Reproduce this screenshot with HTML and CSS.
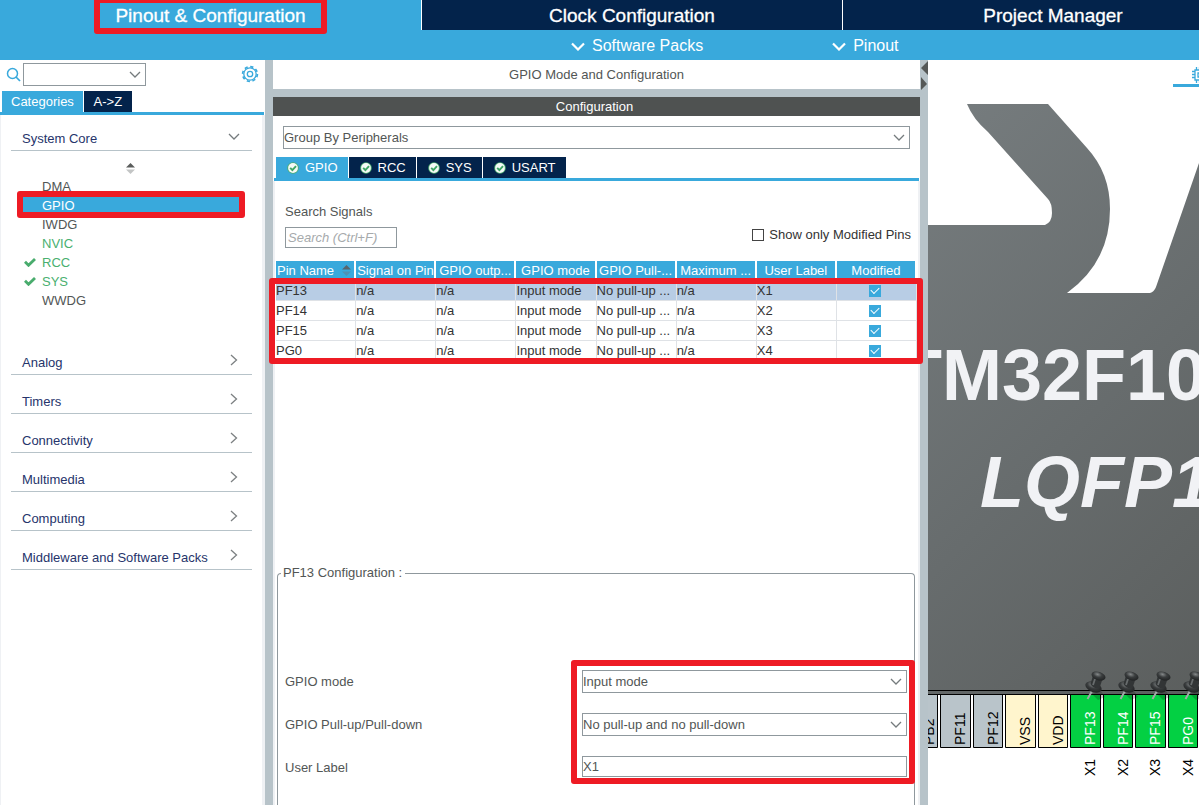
FILE: index.html
```html
<!DOCTYPE html>
<html lang="en">
<head>
<meta charset="utf-8">
<title>Pinout &amp; Configuration</title>
<link rel="stylesheet" href="styles.css">
</head>
<body>
<svg class="defs" aria-hidden="true">
  <defs><radialGradient id="knob" cx=".4" cy=".35" r=".7"><stop offset="0" stop-color="#85898a"/><stop offset=".45" stop-color="#3a3d3e"/><stop offset="1" stop-color="#1e2021"/></radialGradient></defs>
  <symbol id="down" viewBox="0 0 12 7"><path d="M1 1l5 5 5-5" fill="none" stroke="#757b7d" stroke-width="1.3"/></symbol>
  <symbol id="right" viewBox="0 0 8 12"><path d="M1 1l5.500 5L1 11" fill="none" stroke="#7c8082" stroke-width="1.3"/></symbol>
  <symbol id="bold-down" viewBox="0 0 14 9"><path d="M1 1.500l6 6 6-6" fill="none" stroke="#fff" stroke-width="2.2"/></symbol>
  <symbol id="sort" viewBox="0 0 9 11"><path d="M4.500 0L9 4.500H0z" fill="#5a5d5c"/><path d="M0 6.500h9L4.500 11z" fill="#c3c5c5"/></symbol>
  <symbol id="sort-blue" viewBox="0 0 9 11"><path d="M4.500 0L9 4.500H0z" fill="#59656d"/><path d="M0 6.500h9L4.500 11z" fill="#4f91b4"/></symbol>
  <symbol id="check" viewBox="0 0 12 9"><path d="M1 3.800l3.500 3.500L11 1" fill="none" stroke="#49ac6d" stroke-width="2.800"/></symbol>
  <symbol id="ok" viewBox="0 0 12 12"><circle cx="6" cy="6" r="5.800" fill="#4cae70"/><circle cx="6" cy="6" r="4.900" fill="#f4faf6"/><path d="M3.200 5.800l2.200 2.300 3.600-4" fill="none" stroke="#3fa765" stroke-width="1.900"/></symbol>
  <symbol id="pin" viewBox="0 0 26 32">
    <path d="M8 23l9-3 4 6-7 3z" fill="#000" opacity=".2"/>
    <path d="M8 20L3.500 28" stroke="#a2a7a8" stroke-width="2"/>
    <ellipse cx="9.500" cy="16" rx="8.500" ry="5" transform="rotate(22 9.500 16)" fill="url(#knob)"/>
    <path d="M9 4.500L18.500 8 15.500 17Q9 18 6.500 13z" fill="#323536"/>
    <path d="M11 8L9 14" stroke="#686c6d" stroke-width="1.800"/>
    <ellipse cx="14.500" cy="5" rx="7.200" ry="4.200" transform="rotate(18 14.500 5)" fill="url(#knob)"/>
  </symbol>
</svg>

<header class="top">
  <nav class="main-tabs">
    <button class="main-tab active"><span class="marked">Pinout &amp; Configuration</span></button>
    <button class="main-tab">Clock Configuration</button>
    <button class="main-tab">Project Manager</button>
  </nav>
  <div class="menu-bar">
    <button class="menu"><svg class="i14"><use href="#bold-down"/></svg>Software Packs</button>
    <button class="menu"><svg class="i14"><use href="#bold-down"/></svg>Pinout</button>
  </div>
</header>

<main class="workspace">
  <aside class="side">
    <div class="side-tools">
      <svg class="search-icon" viewBox="0 0 15 15"><circle cx="6.500" cy="6.500" r="5" fill="none" stroke="#39a9dc" stroke-width="1.500"/><path d="M10 10l4 4" stroke="#39a9dc" stroke-width="1.700"/></svg>
      <span class="select-wrap finder"><select aria-label="Find peripheral"><option></option></select><svg class="arrow"><use href="#down"/></svg></span>
      <button class="gear" aria-label="Settings"><svg viewBox="0 0 18 18" width="18" height="18"><g fill="none" stroke="#39a9dc"><circle cx="9" cy="9" r="7.400" stroke-width="1.700" stroke-dasharray="3.200 2.611"/><circle cx="9" cy="9" r="6.200" stroke-width="1.300"/><circle cx="9" cy="9" r="2.700" stroke-width="1.300"/></g></svg></button>
    </div>
    <div class="tabs side-tabs"><button class="tab active">Categories</button><button class="tab">A-&gt;Z</button></div>
    <div class="side-body">
      <button class="cat">System Core<svg class="i12"><use href="#down"/></svg></button>
      <svg class="sorter"><use href="#sort"/></svg>
      <ul class="items">
        <li>DMA</li>
        <li class="selected">GPIO</li>
        <li>IWDG</li>
        <li class="green">NVIC</li>
        <li class="green"><svg class="tick"><use href="#check"/></svg>RCC</li>
        <li class="green"><svg class="tick"><use href="#check"/></svg>SYS</li>
        <li>WWDG</li>
      </ul>
      <button class="cat">Analog<svg class="i8"><use href="#right"/></svg></button>
      <button class="cat">Timers<svg class="i8"><use href="#right"/></svg></button>
      <button class="cat">Connectivity<svg class="i8"><use href="#right"/></svg></button>
      <button class="cat">Multimedia<svg class="i8"><use href="#right"/></svg></button>
      <button class="cat">Computing<svg class="i8"><use href="#right"/></svg></button>
      <button class="cat">Middleware and Software Packs<svg class="i8"><use href="#right"/></svg></button>
    </div>
  </aside>
  <div class="divider"></div>

  <section class="config">
    <h1 class="mode-title">GPIO Mode and Configuration</h1>
    <h2 class="config-title">Configuration</h2>
    <div class="config-body">
      <span class="select-wrap group-by"><select aria-label="Grouping"><option>Group By Peripherals</option></select><svg class="arrow"><use href="#down"/></svg></span>
      <div class="tabs signal-tabs">
        <button class="tab active"><svg class="i12r"><use href="#ok"/></svg>GPIO</button>
        <button class="tab"><svg class="i12r"><use href="#ok"/></svg>RCC</button>
        <button class="tab"><svg class="i12r"><use href="#ok"/></svg>SYS</button>
        <button class="tab"><svg class="i12r"><use href="#ok"/></svg>USART</button>
      </div>
      <div class="signals">
        <div class="search-row">
          <div class="search-box"><label for="q">Search Signals</label><input id="q" type="text" placeholder="Search (Ctrl+F)"></div>
          <label class="only"><input type="checkbox" class="plain-box">Show only Modified Pins</label>
        </div>
        <div class="table-area">
          <table class="pins">
            <thead><tr><th class="first"><span>Pin Name<svg class="sort-mini"><use href="#sort-blue"/></svg></span></th><th class="left">Signal on Pin</th><th>GPIO outp...</th><th>GPIO mode</th><th>GPIO Pull-...</th><th>Maximum ...</th><th>User Label</th><th>Modified</th></tr></thead>
            <tbody>
              <tr class="current"><td>PF13</td><td>n/a</td><td>n/a</td><td>Input mode</td><td>No pull-up ...</td><td>n/a</td><td>X1</td><td class="mod"><input type="checkbox" class="blue-box" aria-label="PF13 modified" checked></td></tr>
              <tr><td>PF14</td><td>n/a</td><td>n/a</td><td>Input mode</td><td>No pull-up ...</td><td>n/a</td><td>X2</td><td class="mod"><input type="checkbox" class="blue-box" aria-label="PF14 modified" checked></td></tr>
              <tr><td>PF15</td><td>n/a</td><td>n/a</td><td>Input mode</td><td>No pull-up ...</td><td>n/a</td><td>X3</td><td class="mod"><input type="checkbox" class="blue-box" aria-label="PF15 modified" checked></td></tr>
              <tr><td>PG0</td><td>n/a</td><td>n/a</td><td>Input mode</td><td>No pull-up ...</td><td>n/a</td><td>X4</td><td class="mod"><input type="checkbox" class="blue-box" aria-label="PG0 modified" checked></td></tr>
            </tbody>
          </table>
        </div>
        <fieldset class="pin-config">
          <legend>PF13 Configuration :</legend>
          <div class="form">
            <div class="labels"><label for="mode">GPIO mode</label><label for="pull">GPIO Pull-up/Pull-down</label><label for="ulabel">User Label</label></div>
            <div class="fields">
              <span class="select-wrap"><select id="mode"><option>Input mode</option></select><svg class="arrow"><use href="#down"/></svg></span>
              <span class="select-wrap"><select id="pull"><option>No pull-up and no pull-down</option></select><svg class="arrow"><use href="#down"/></svg></span>
              <input id="ulabel" type="text" value="X1">
            </div>
          </div>
        </fieldset>
      </div>
    </div>
  </section>
  <div class="divider"><svg class="collapse" viewBox="0 0 8 32"><path d="M8 1v14L1 8zM1 17v13l6-6z" fill="#555857"/></svg></div>

  <section class="view">
    <div class="view-tabs"><button class="view-tab" aria-label="Pinout view"><svg viewBox="0 0 16 16" width="16" height="16"><path d="M3 3h10v10H3zM6 6h4v4H6zM4.500 0v3M7.500 0v3M10.500 0v3M4.500 13v3M7.500 13v3M10.500 13v3M0 4.500h3M0 7.500h3M0 10.500h3M13 4.500h3M13 7.500h3M13 10.500h3" fill="none" stroke="#39a9dc" stroke-width="1.300"/></svg></button></div>
    <svg class="chip" role="img" aria-label="Chip package view">
      <defs><linearGradient id="body" gradientUnits="userSpaceOnUse" x1="0" y1="60" x2="430" y2="490"><stop offset="0" stop-color="#757b7d"/><stop offset=".5" stop-color="#676c6d"/><stop offset="1" stop-color="#5a5d5c"/></linearGradient></defs>
      <path fill="url(#body)" d="M0 137H117Q124 134 124 125Q124 115 120 111L60 44Q45 31 39 16H120L159 60Q182 85 182 121Q182 174 139 205H222Q226 204 228 199L271 75H400V606H0z"/>
      <path d="M0 602.500H400" stroke="#000"/>
      <g class="package"><text x="-30" y="312">TM32F10</text><text x="52" y="419" class="slant">LQFP1</text></g>
      <g stroke="#000">
        <path d="M0 606.500H9.500V659.500H0M12.500 606.500h30v53h-30zM45.500 606.500h29v53h-29z" fill="#b9c4ca"/>
        <path d="M77.500 606.500h30v53h-30zM110.500 606.500h29v53h-29z" fill="#fff5cd"/>
        <path d="M142.500 606.500h30v53h-30zM175.500 606.500h29v53h-29zM207.500 606.500h30v53h-30zM240.500 606.500h29v53h-29z" fill="#03d043"/>
        <path d="M0 606.500H400"/>
      </g>
      <g class="pin-text">
        <text transform="translate(6 657) rotate(-90)">PB2</text>
        <text transform="translate(37 657) rotate(-90)">PF11</text>
        <text transform="translate(70 657) rotate(-90)">PF12</text>
        <text transform="translate(102 657) rotate(-90)">VSS</text>
        <text transform="translate(135 657) rotate(-90)">VDD</text>
        <g fill="#fff">
          <text transform="translate(167 657) rotate(-90)">PF13</text>
          <text transform="translate(200 657) rotate(-90)">PF14</text>
          <text transform="translate(232 657) rotate(-90)">PF15</text>
          <text transform="translate(265 657) rotate(-90)">PG0</text>
        </g>
        <text transform="translate(167 688) rotate(-90)">X1</text>
        <text transform="translate(200 688) rotate(-90)">X2</text>
        <text transform="translate(232 688) rotate(-90)">X3</text>
        <text transform="translate(265 688) rotate(-90)">X4</text>
      </g>
      <use href="#pin" x="156" y="583" width="26" height="32"/>
      <use href="#pin" x="189" y="583" width="26" height="32"/>
      <use href="#pin" x="221" y="583" width="26" height="32"/>
      <use href="#pin" x="254" y="583" width="26" height="32"/>
    </svg>
  </section>
</main>
</body>
</html>
```
FILE: styles.css
```css
* { box-sizing: border-box; }
:root { --blue: #39a9dc; --navy: #03234b; --rail: #b7c3c9; --red: #ee1b24; --line: #8f989d; --edge: #eff1f4; --ink: #525655; }
body { margin: 0; height: 100vh; overflow: hidden; display: flex; flex-direction: column; background: #fff; color: var(--ink); font: 13px/16px "Liberation Sans", Arial, sans-serif; }
button, input, select { font: inherit; color: inherit; border: 0; margin: 0; padding: 0; background: none; border-radius: 0; }
.defs { position: absolute; width: 0; height: 0; }

.top { flex: none; background: var(--blue); color: #fff; overflow: clip; }
.main-tabs { display: grid; grid-template-columns: repeat(3, 1fr); width: calc(100% + 64px); height: 30px; }
.main-tab { background: var(--navy); border-left: 1px solid #fff; font-size: 19px; line-height: 20px; padding-top: 2px; -webkit-text-stroke: 0.3px #fff; }
.main-tab.active { background: var(--blue); border-left: 0; }
.marked { position: relative; }
.marked::after { content: ""; position: absolute; inset: -8px -21px; border: 6px solid var(--red); border-radius: 3px; }
.menu-bar { height: 30px; padding: 2px 0 0 571px; display: flex; gap: 126px; }
.menu { display: flex; align-items: center; gap: 7px; font-size: 16px; white-space: nowrap; }
.i14 { width: 14px; height: 9px; }
.menu + .menu { margin-left: 3px; }

.workspace { flex: 1; min-height: 0; display: grid; grid-template-columns: 265px 8px minmax(0, 647fr) 8px minmax(0, 271fr); }
.divider { background: var(--rail); }
.collapse { display: block; width: 8px; height: 32px; }

.side { display: flex; flex-direction: column; }
.side-tools { display: flex; align-items: center; height: 31px; padding: 0 6px 3px; }
.search-icon { width: 15px; height: 15px; margin-right: 2px; }
.select-wrap { position: relative; display: block; }
.select-wrap select { display: block; appearance: none; width: 100%; height: 23px; border: 1px solid var(--line); background: #fff; }
.arrow { position: absolute; right: 5px; top: 8px; width: 12px; height: 7px; pointer-events: none; }
.finder { width: 123px; }
.gear { margin-left: auto; height: 20px; line-height: 0; }
.gear svg { display: block; }
.tabs { display: flex; border-bottom: 3px solid var(--blue); color: #fff; gap: 1px; flex: none; }
.tab { display: flex; align-items: center; justify-content: center; gap: 6px; min-width: 48px; height: 21px; background: var(--navy); padding: 0 9px; }
.tab.active { background: var(--blue); }
.side-tabs { padding-left: 2px; margin-right: 1px; }
.side-body { flex: 1; border-left: 1px solid var(--edge); border-right: 3px solid var(--edge); padding: 0 10px; display: flex; flex-direction: column; }
.cat { flex: none; display: flex; justify-content: space-between; align-items: flex-end; height: 39px; padding: 0 12px 3px 11px; border-bottom: 1px solid var(--rail); color: #26346b; text-align: left; }
.cat:first-child { height: 36px; }
.cat svg { margin-bottom: 5px; }
.i12 { width: 12px; height: 7px; }
.cat .i12 { margin-bottom: 7px; }
.i8 { width: 8px; height: 12px; margin-right: 2px; }
.sorter { width: 9px; height: 11px; margin: 12px auto 3px 115px; flex: none; }
.items { list-style: none; margin: 0 12px 26px; padding: 0; }
.items li { display: flex; align-items: center; position: relative; height: 19px; padding-left: 19px; }
.items .green { color: #49b06f; }
.items .selected { background: var(--blue); color: #fff; }
.items .selected::after { content: ""; position: absolute; inset: -5px -5px -3px -6px; border: 6px solid var(--red); border-radius: 3px; }
.tick { position: absolute; left: 1px; top: 5px; width: 12px; height: 9px; }

.config { display: flex; flex-direction: column; }
.mode-title, .config-title { margin: 0; font-size: 13px; font-weight: 400; text-align: center; }
.mode-title { height: 37px; line-height: 29px; border-bottom: 8px solid var(--rail); }
.config-title { height: 19px; line-height: 19px; padding-right: 4px; background: #4f5251; color: #fff; }
.config-body { flex: 1; min-height: 0; display: flex; flex-direction: column; padding-top: 10px; }
.group-by { margin: 0 10px 8px; flex: none; }
.signal-tabs { margin: 0 1px; padding-left: 2px; }
.signal-tabs .tab { padding: 0 10px 0 11px; }
.i12r { width: 12px; height: 12px; }
.signals { flex: 1; min-height: 0; display: flex; flex-direction: column; border: solid var(--edge); border-width: 0 2px; padding: 23px 1px 0; }
.search-row { display: flex; justify-content: space-between; align-items: flex-end; padding: 0 6px 13px 9px; }
.search-box { display: grid; gap: 7px; }
.search-box input { width: 112px; height: 21px; border: 1px solid var(--line); padding: 0 2px; }
.search-box input::placeholder { color: #a6aaac; font-style: italic; opacity: 1; }
.only { display: flex; align-items: center; gap: 5px; color: #333; padding-bottom: 5px; }
.plain-box { appearance: none; width: 12px; height: 12px; border: 1px solid #444; }
.table-area { flex: 1; }
.pins { position: relative; width: 100%; table-layout: fixed; border-spacing: 0; color: #333; }
.pins th { height: 20px; padding: 0; border-bottom: 1px solid #fff; border-right: 2px solid #fff; background: var(--blue); background-clip: padding-box; color: #fff; font-weight: 400; overflow: hidden; white-space: nowrap; }
.pins .left { text-align: left; padding-left: 1px; }
.pins .first { padding: 0 3px 0 1px; }
.first span { display: flex; justify-content: space-between; align-items: center; }
.sort-mini { width: 9px; height: 11px; }
.pins td { height: 20px; padding: 0; border-right: 1px solid #dfe2e6; border-bottom: 1px solid #dfe2e6; white-space: nowrap; overflow: hidden; }
.pins .current td { background: #b8cde5; }
.pins .mod { text-align: center; line-height: 0; padding-right: 2px; }
.pins tbody::after { content: ""; position: absolute; inset: 17px -6px -3px -7px; border: 6px solid var(--red); border-radius: 3px; }
.blue-box { appearance: none; width: 12px; height: 12px; background: var(--blue); display: inline-grid; place-items: center; vertical-align: middle; }
.blue-box:checked::before { content: ""; width: 7px; height: 4px; border: solid #fff; border-width: 0 0 1px 1px; transform: translateY(-1px) rotate(-45deg); }
.pin-config { flex: none; height: 240px; min-width: 0; margin: 0 2px 0 1px; padding: 0 7px; border: 1px solid var(--line); border-bottom: 0; border-radius: 4px 4px 0 0; }
.pin-config legend { padding: 0 3px 0 2px; margin-left: -4px; }
.form { display: grid; grid-template-columns: 297fr 325fr; padding-top: 89px; }
.labels, .fields { display: grid; gap: 20px; grid-auto-rows: 23px; }
.labels { align-items: center; }
.fields { position: relative; }
.fields::after { content: ""; position: absolute; inset: -10px -8px -5px -11px; border: 6px solid var(--red); border-radius: 3px; pointer-events: none; }
.fields input { width: 100%; height: 21px; border: 1px solid var(--line); }

.view { display: flex; flex-direction: column; overflow: hidden; }
.view-tabs { flex: none; height: 28px; display: flex; justify-content: flex-end; }
.view-tab { width: 54px; height: 27px; margin-right: -28px; padding-top: 5px; border-bottom: 3px solid var(--blue); line-height: 0; }
.chip { flex: 1; min-height: 0; width: 100%; overflow: hidden; }
.package { fill: #f1f2f5; font-size: 72px; font-weight: 700; }
.slant { font-style: italic; }
.pin-text { font-size: 14px; }
```
